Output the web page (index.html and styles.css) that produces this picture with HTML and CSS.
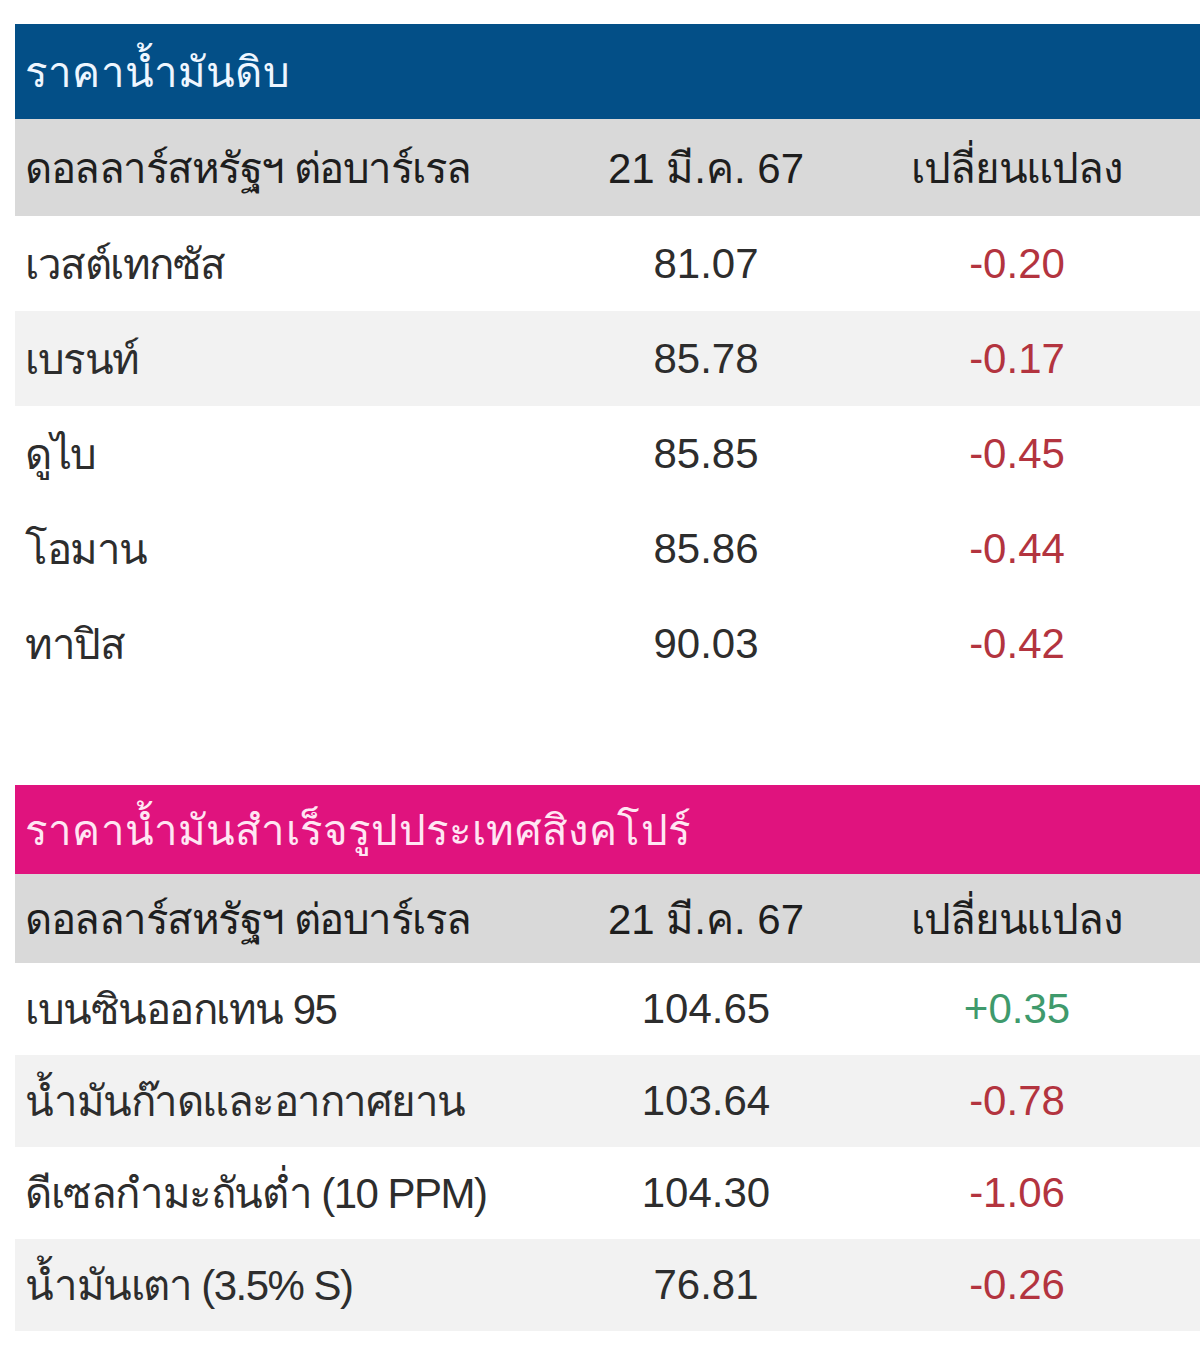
FILE: index.html
```html
<!DOCTYPE html>
<html lang="th">
<head>
<meta charset="utf-8">
<title>ราคาน้ำมัน</title>
<link rel="stylesheet" href="styles.css">
</head>
<body>
<div class="page">
  <section class="price-table crude">
    <div class="title">ราคาน้ำมันดิบ</div>
    <div class="row head">
      <div class="c1">ดอลลาร์สหรัฐฯ ต่อบาร์เรล</div>
      <div class="c2">21 มี.ค. 67</div>
      <div class="c3">เปลี่ยนแปลง</div>
    </div>
    <div class="row">
      <div class="c1">เวสต์เทกซัส</div>
      <div class="c2">81.07</div>
      <div class="c3 down">-0.20</div>
    </div>
    <div class="row alt">
      <div class="c1">เบรนท์</div>
      <div class="c2">85.78</div>
      <div class="c3 down">-0.17</div>
    </div>
    <div class="row">
      <div class="c1">ดูไบ</div>
      <div class="c2">85.85</div>
      <div class="c3 down">-0.45</div>
    </div>
    <div class="row">
      <div class="c1">โอมาน</div>
      <div class="c2">85.86</div>
      <div class="c3 down">-0.44</div>
    </div>
    <div class="row">
      <div class="c1">ทาปิส</div>
      <div class="c2">90.03</div>
      <div class="c3 down">-0.42</div>
    </div>
  </section>

  <section class="price-table refined">
    <div class="title">ราคาน้ำมันสำเร็จรูปประเทศสิงคโปร์</div>
    <div class="row head">
      <div class="c1">ดอลลาร์สหรัฐฯ ต่อบาร์เรล</div>
      <div class="c2">21 มี.ค. 67</div>
      <div class="c3">เปลี่ยนแปลง</div>
    </div>
    <div class="row">
      <div class="c1">เบนซินออกเทน 95</div>
      <div class="c2">104.65</div>
      <div class="c3 up">+0.35</div>
    </div>
    <div class="row alt">
      <div class="c1">น้ำมันก๊าดและอากาศยาน</div>
      <div class="c2">103.64</div>
      <div class="c3 down">-0.78</div>
    </div>
    <div class="row">
      <div class="c1">ดีเซลกำมะถันต่ำ (10 PPM)</div>
      <div class="c2">104.30</div>
      <div class="c3 down">-1.06</div>
    </div>
    <div class="row alt">
      <div class="c1">น้ำมันเตา (3.5% S)</div>
      <div class="c2">76.81</div>
      <div class="c3 down">-0.26</div>
    </div>
  </section>
</div>
</body>
</html>
```

FILE: styles.css
```css
html, body {
  margin: 0;
  padding: 0;
  background: #ffffff;
}

body {
  font-family: "Liberation Sans", "Noto Sans", sans-serif;
  font-size: 42px;
  color: #2d2d2d;
}

.page {
  padding-top: 24px;
  margin-left: 15px;
  width: 1185px;
  display: flex;
  flex-direction: column;
  gap: 94px;
}

.price-table {
  display: flex;
  flex-direction: column;
}

.title {
  height: 95px;
  display: flex;
  align-items: center;
  padding-left: 10px;
  color: #eef6ff;
  white-space: nowrap;
  letter-spacing: 0.2px;
}

.crude .title {
  background: #034f87;
}

.refined .title {
  background: #e0137e;
  color: #ffe6f3;
  height: 89px;
}

.row {
  display: grid;
  grid-template-columns: 563px 256px 366px;
  height: 95px;
  align-items: center;
  background: #ffffff;
}

.refined .row {
  height: 92px;
}

.row.head {
  background: #d9d9d9;
  color: #1e1e1e;
  height: 97px;
}

.refined .row.head {
  height: 89px;
}

.row.alt {
  background: #f2f2f2;
}

.c1 {
  padding-left: 10px;
  white-space: nowrap;
  letter-spacing: -1.5px;
}

.c2,
.c3 {
  text-align: center;
  white-space: nowrap;
}

.head .c3 {
  letter-spacing: -1.1px;
}

.down {
  color: #b3343f;
}

.up {
  color: #3f9a6c;
}
```
